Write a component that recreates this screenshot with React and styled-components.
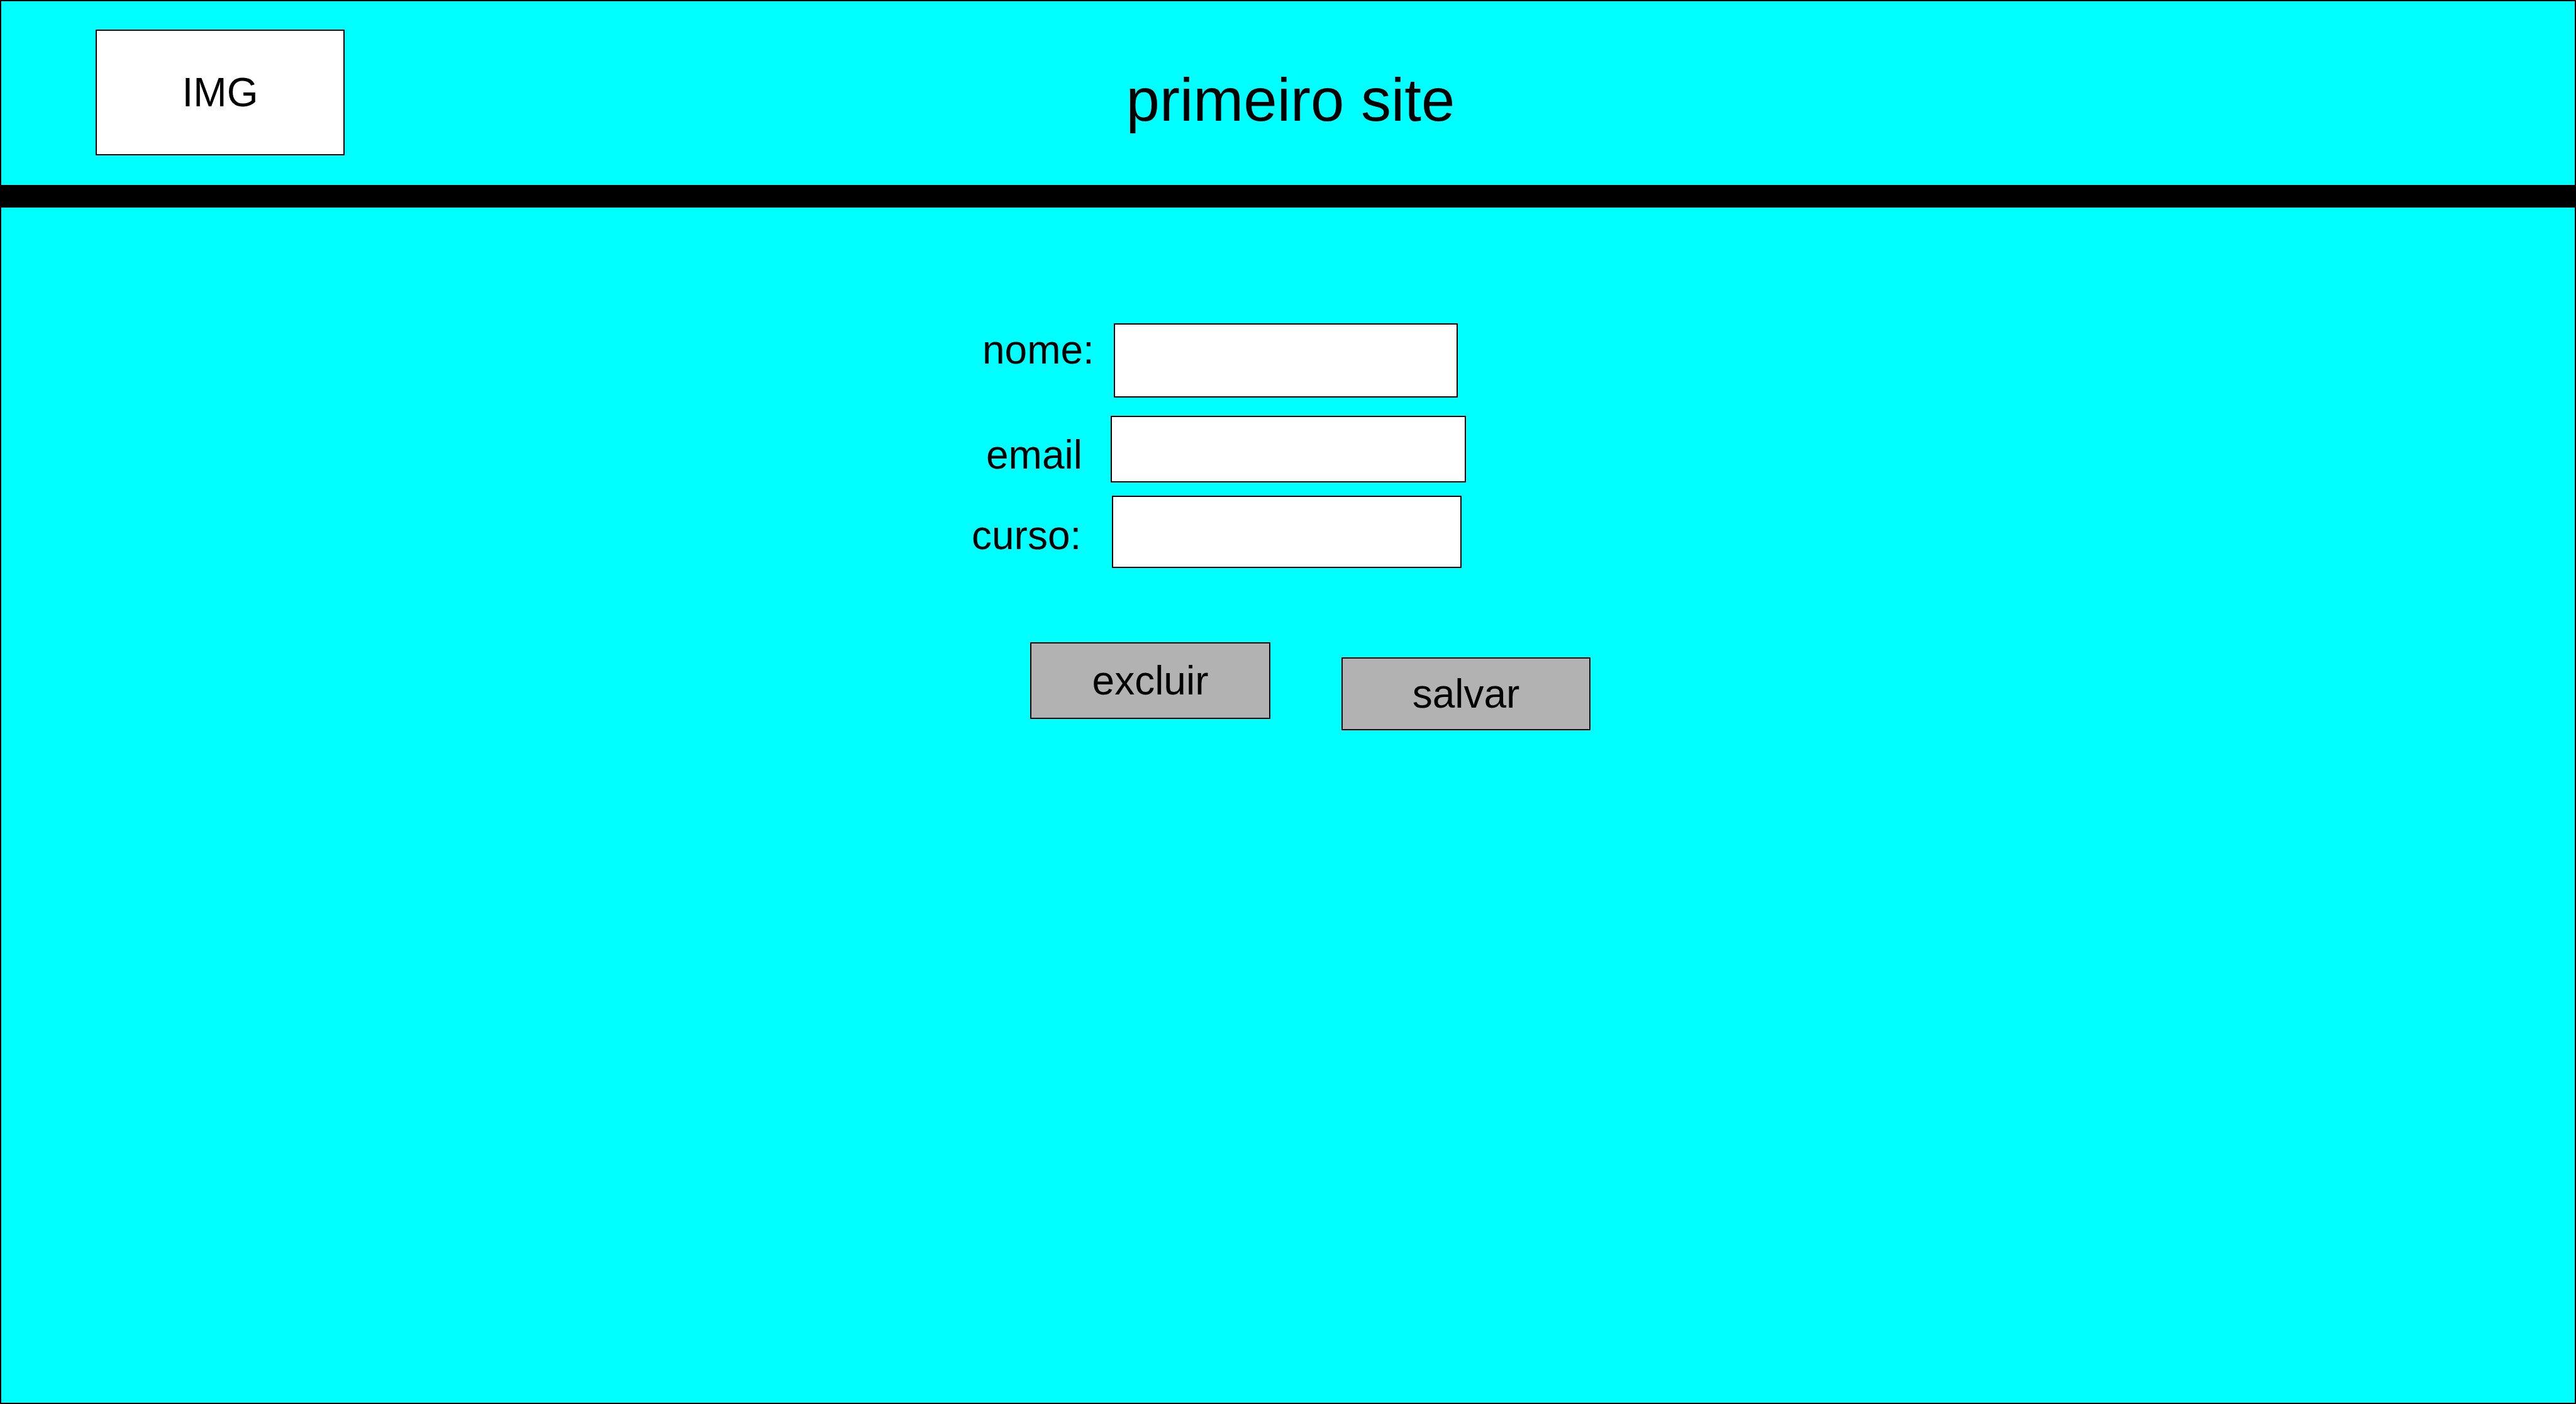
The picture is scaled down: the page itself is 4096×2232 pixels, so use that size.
import React from "react";
import styled, { createGlobalStyle } from "styled-components";

const GlobalStyle = createGlobalStyle`
  *, *::before, *::after { box-sizing: border-box; }
  body {
    margin: 0;
    background: #00ffff;
    color: #000000;
    font-family: "Liberation Sans", Arial, Helvetica, sans-serif;
    font-size: 64px;
    line-height: 72px;
  }
`;

const Page = styled.div`
  display: flex;
  flex-direction: column;
  min-height: 100vh;
  border: 2px solid #000000;
  background: #00ffff;
`;

const Header = styled.header`
  display: grid;
  grid-template-columns: 1fr auto 1fr;
  align-items: center;
  padding: 45px 150px 47px;
  border-bottom: 36px solid #000000;
`;

const Logo = styled.div`
  display: flex;
  align-items: center;
  justify-content: center;
  width: 396px;
  height: 200px;
  border: 2px solid #000000;
  background: #ffffff;
`;

const Title = styled.h1`
  margin: 0;
  padding: 24px 0 0 8px;
  font-size: 96px;
  font-weight: 400;
  line-height: 112px;
  white-space: nowrap;
`;

const Form = styled.form`
  width: 1008px;
  max-width: 100%;
  margin: 184px auto 0;
`;

const Field = styled.div`
  display: flex;
  align-items: flex-start;
  margin-bottom: ${(p) => p.$gap}px;
`;

const Label = styled.label`
  flex: none;
  width: ${(p) => p.$width}px;
  padding: ${(p) => p.$drop}px 0 0 ${(p) => p.$indent}px;
`;

const Input = styled.input`
  width: ${(p) => p.$width}px;
  height: ${(p) => p.$height}px;
  padding: 0 24px;
  border: 2px solid #000000;
  border-radius: 0;
  background: #ffffff;
  font: inherit;
`;

const Actions = styled.div`
  display: flex;
  align-items: flex-start;
  gap: 113px;
  padding: 118px 0 0 94px;
`;

const Button = styled.button`
  width: ${(p) => p.$width}px;
  height: ${(p) => p.$height}px;
  margin: ${(p) => p.$drop || 0}px 0 0;
  padding: 0;
  border: 2px solid #000000;
  border-radius: 0;
  background: #b2b2b2;
  color: inherit;
  font: inherit;
`;

const fields = [
  { id: "nome", label: "nome:", type: "text", indent: 18, drop: 6, labelWidth: 227, width: 547, height: 118, gap: 29 },
  { id: "email", label: "email", type: "email", indent: 24, drop: 26, labelWidth: 222, width: 565, height: 106, gap: 21 },
  { id: "curso", label: "curso:", type: "text", indent: 1, drop: 27, labelWidth: 224, width: 556, height: 115, gap: 0 },
];

export default function App() {
  return (
    <Page>
      <GlobalStyle />
      <Header>
        <Logo>IMG</Logo>
        <Title>primeiro site</Title>
      </Header>
      <main>
        <Form onSubmit={(e) => e.preventDefault()}>
          {fields.map((f) => (
            <Field key={f.id} $gap={f.gap}>
              <Label htmlFor={f.id} $indent={f.indent} $drop={f.drop} $width={f.labelWidth}>
                {f.label}
              </Label>
              <Input id={f.id} name={f.id} type={f.type} $width={f.width} $height={f.height} />
            </Field>
          ))}
          <Actions>
            <Button type="button" $width={382} $height={122}>excluir</Button>
            <Button type="submit" $width={396} $height={116} $drop={24}>salvar</Button>
          </Actions>
        </Form>
      </main>
    </Page>
  );
}
